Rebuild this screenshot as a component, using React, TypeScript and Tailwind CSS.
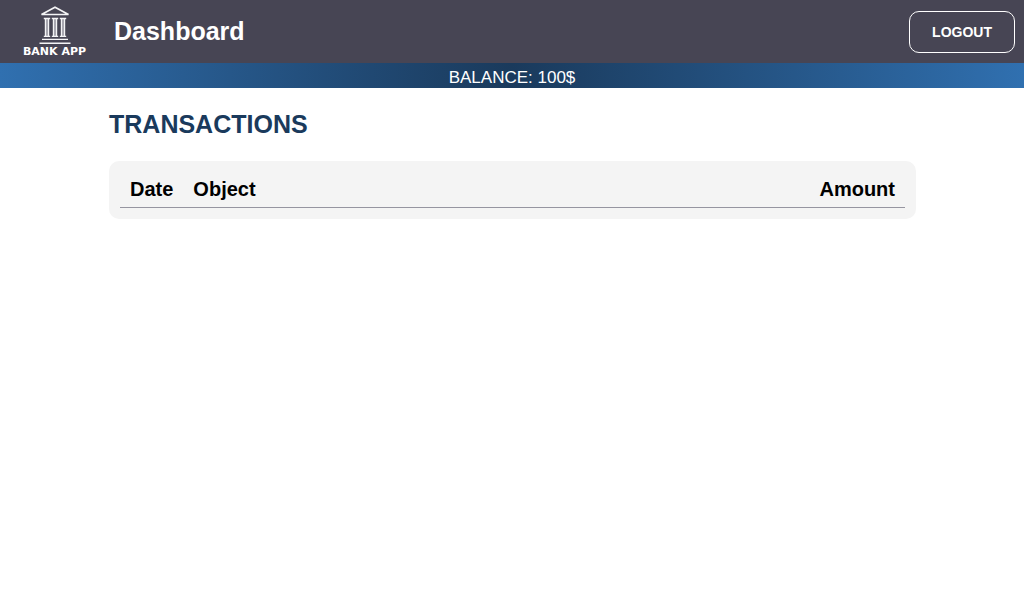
function BankLogo() {
  return (
    <a href="#" aria-label="Bank App home" className="flex w-[109px] flex-col items-center pt-1.5 text-white no-underline">
      <svg viewBox="0 0 32 38" className="h-[38px] w-8" fill="none" stroke="#f4f4f6" aria-hidden="true">
        <path d="M2.5 8.5L16 1.2L29.5 8.5Z" strokeWidth="1.6" />
        <path d="M6 12.5h4v18h-4zM14 12.5h4v18h-4zM22 12.5h4v18h-4z" fill="#a9a8b1" stroke="none" />
        <path d="M4.8 12.5h6.4M12.8 12.5h6.4M20.8 12.5h6.4M4.8 30.3h6.4M12.8 30.3h6.4M20.8 30.3h6.4" strokeWidth="1.3" />
        <path d="M6.4 12.5V30M9.6 12.5V30M14.4 12.5V30M17.6 12.5V30M22.4 12.5V30M25.6 12.5V30" strokeWidth="1.2" />
        <path d="M3 33.4h26M0.5 37.2h31" strokeWidth="1.4" />
      </svg>
      <span className="font-['DejaVu_Sans',sans-serif] text-[11px] leading-4 font-bold whitespace-nowrap">BANK APP</span>
    </a>
  );
}

const transactions: { date: string; object: string; amount: string }[] = [];

export default function App() {
  return (
    <div className="min-h-screen bg-white font-['Liberation_Sans',Arial,sans-serif] text-black">
      <header className="flex h-[63px] items-center justify-between bg-[#474554] pr-[9px]">
        <div className="flex items-center self-start">
          <BankLogo />
          <h1 className="pt-0.5 pl-[5px] text-[25px] leading-7 font-bold text-white">Dashboard</h1>
        </div>
        <button type="button" className="h-[42px] rounded-[10px] border border-white px-[22px] text-[14px] leading-4 font-bold text-white">
          LOGOUT
        </button>
      </header>
      <div className="bg-linear-to-r from-[#3070b0] via-[#1a3a5c] to-[#3070b0] pt-1 text-center text-[17px] leading-[21px] text-white">
        BALANCE: 100$
      </div>
      <main className="pt-[22px] pr-[108px] pl-[109px]">
        <h2 className="text-[25px] leading-7 font-bold text-[#1a3a5c]">TRANSACTIONS</h2>
        <section className="mt-[23px] rounded-[10px] bg-[#f4f4f4] p-[11px]">
          <table className="w-full border-collapse text-[20px] leading-[22px]">
            <thead>
              <tr className="border-b border-[#9695a0]">
                <th scope="col" className="w-px px-2.5 pt-1.5 pb-[7px] text-left">Date</th>
                <th scope="col" className="px-2.5 pt-1.5 pb-[7px] text-left">Object</th>
                <th scope="col" className="px-2.5 pt-1.5 pb-[7px] text-right">Amount</th>
              </tr>
            </thead>
            <tbody>
              {transactions.map((t) => (
                <tr key={t.date + t.object}>
                  <td className="px-2.5 py-1">{t.date}</td>
                  <td className="px-2.5 py-1">{t.object}</td>
                  <td className="px-2.5 py-1 text-right">{t.amount}</td>
                </tr>
              ))}
            </tbody>
          </table>
        </section>
      </main>
    </div>
  );
}
